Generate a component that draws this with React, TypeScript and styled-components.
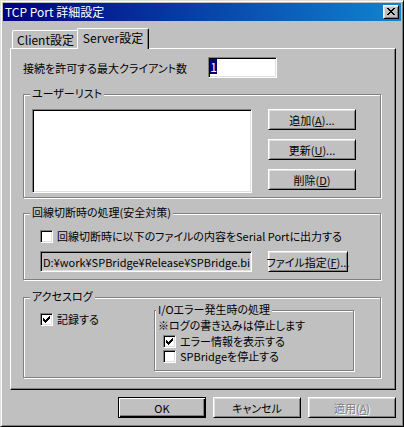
import React from "react";
import styled, { createGlobalStyle } from "styled-components";

const FACE = "#c0c0c0";
const LIGHT = "#dfdfdf";
const SHADOW = "#808080";
const DARK = "#000000";
const HI = "#ffffff";

const GlobalStyle = createGlobalStyle`
  html, body { margin: 0; padding: 0; background: ${FACE}; }
  body {
    font-family: "Noto Sans CJK JP", "Noto Sans", sans-serif;
    font-size: 11px;
    font-feature-settings: "palt" 1;
    color: #000;
  }
  *, *::before, *::after { box-sizing: border-box; }
`;

const Window = styled.div`
  width: 404px;
  height: 427px;
  background: ${FACE};
  border-top: 1px solid ${LIGHT};
  border-left: 1px solid ${LIGHT};
  border-right: 1px solid ${DARK};
  border-bottom: 1px solid ${DARK};
  box-shadow: inset 1px 1px 0 ${HI}, inset -1px -1px 0 ${SHADOW};
  padding: 2px;
  display: flex;
  flex-direction: column;
`;

const Caption = styled.div`
  height: 18px;
  flex: none;
  background: linear-gradient(to right, #000080, #1084d0);
  display: flex;
  align-items: center;
  padding: 0 2px 0 2px;
  color: #fff;
`;

const CaptionTitle = styled.span`
  font-size: 12px;
  line-height: 16px;
  white-space: nowrap;
`;

const CloseButton = styled.div`
  margin-left: auto;
  width: 16px;
  height: 14px;
  background: ${FACE};
  border-top: 1px solid ${HI};
  border-left: 1px solid ${HI};
  border-right: 1px solid ${DARK};
  border-bottom: 1px solid ${DARK};
  box-shadow: inset 1px 1px 0 ${LIGHT}, inset -1px -1px 0 ${SHADOW};
  padding: 2px 0 0 3px;
  svg { display: block; }
`;

const Body = styled.div`
  flex: 1;
  padding: 7px 5px 0 7px;
  display: flex;
  flex-direction: column;
`;

const TabRow = styled.div`
  height: 20px;
  display: flex;
  align-items: flex-end;
  padding-left: 2px;
  position: relative;
  z-index: 1;
`;

const Tab = styled.div<{ $active?: boolean; $w: number }>`
  width: ${(p) => p.$w}px;
  height: ${(p) => (p.$active ? 21 : 18)}px;
  margin-bottom: ${(p) => (p.$active ? -1 : 0)}px;
  margin-left: ${(p) => (p.$active ? -2 : 0)}px;
  background: ${FACE};
  border-top: 1px solid ${HI};
  border-left: 1px solid ${HI};
  border-right: 1px solid ${DARK};
  border-top-left-radius: 2px;
  border-top-right-radius: 2px;
  box-shadow: inset -1px 0 0 ${SHADOW};
  display: flex;
  align-items: center;
  justify-content: center;
  padding-bottom: ${(p) => (p.$active ? 2 : 0)}px;
  white-space: nowrap;
  font-size: 12px;
  line-height: 14px;
`;

const Panel = styled.div`
  width: 386px;
  height: 342px;
  flex: none;
  border-top: 1px solid ${HI};
  border-left: 1px solid ${HI};
  border-right: 1px solid ${DARK};
  border-bottom: 1px solid ${DARK};
  box-shadow: inset -1px -1px 0 ${SHADOW};
  padding: 8px 0 0 12px;
  display: flex;
  flex-direction: column;
`;

const FieldRow = styled.div`
  display: flex;
  align-items: center;
  height: 21px;
`;

const FieldLabel = styled.span`
  width: 185px;
  flex: none;
  white-space: nowrap;
`;

const Sunken = styled.div`
  flex: none;
  border-top: 1px solid ${SHADOW};
  border-left: 1px solid ${SHADOW};
  border-right: 1px solid ${HI};
  border-bottom: 1px solid ${HI};
  box-shadow: inset 1px 1px 0 ${DARK}, inset -1px -1px 0 ${LIGHT};
`;

const TextInput = styled(Sunken)`
  width: 69px;
  height: 21px;
  background: #fff;
  padding: 1px 0 0 1px;
  display: flex;
  align-items: flex-start;
`;

const Selection = styled.span`
  background: #000080;
  color: #fff;
  width: 7px;
  height: 15px;
  line-height: 15px;
  font-size: 12px;
  text-align: center;
`;

const Group = styled.div<{ $w: number; $h: number }>`
  position: relative;
  flex: none;
  width: ${(p) => p.$w}px;
  height: ${(p) => p.$h}px;
  border: 1px solid ${SHADOW};
  box-shadow: inset 1px 1px 0 ${HI}, 1px 1px 0 ${HI};
`;

const Legend = styled.span<{ $left: number }>`
  position: absolute;
  top: -10px;
  left: ${(p) => p.$left}px;
  padding: 0 2px;
  background: ${FACE};
  line-height: 16px;
  white-space: nowrap;
`;

const UserGroup = styled(Group)`
  margin-top: 16px;
  padding: 14px 0 0 8px;
  display: flex;
  align-items: flex-start;
`;

const ListBox = styled(Sunken)`
  width: 220px;
  height: 84px;
  background: #fff;
`;

const ButtonColumn = styled.div`
  margin-left: 16px;
  display: flex;
  flex-direction: column;
  gap: 9px;
`;

const Button = styled.div<{ $w?: number; $default?: boolean; $disabled?: boolean }>`
  width: ${(p) => p.$w ?? 88}px;
  height: 21px;
  flex: none;
  background: ${FACE};
  display: flex;
  align-items: center;
  justify-content: center;
  white-space: nowrap;
  line-height: 14px;
  color: ${(p) => (p.$disabled ? SHADOW : "#000")};
  text-shadow: ${(p) => (p.$disabled ? `1px 1px 0 ${HI}` : "none")};
  border: 1px solid ${DARK};
  border-top-color: ${(p) => (p.$default ? DARK : HI)};
  border-left-color: ${(p) => (p.$default ? DARK : HI)};
  box-shadow: ${(p) =>
    p.$default
      ? `inset 1px 1px 0 ${HI}, inset -1px -1px 0 ${DARK}, inset -2px -2px 0 ${SHADOW}`
      : `inset 1px 1px 0 ${LIGHT}, inset -1px -1px 0 ${SHADOW}`};
`;

const Mn = styled.span`
  text-decoration: underline;
  text-underline-offset: 1px;
`;

const SafetyGroup = styled(Group)`
  margin-top: 15px;
  padding: 16px 0 0 16px;
  display: flex;
  flex-direction: column;
`;

const CheckRow = styled.div`
  display: flex;
  align-items: center;
  gap: 4px;
  height: 13px;
  white-space: nowrap;
  line-height: 13px;
`;

const CheckBox = styled(Sunken)`
  width: 13px;
  height: 13px;
  background: #fff;
  padding: 2px;
  svg { display: block; }
`;

const PathRow = styled.div`
  margin-top: 8px;
  display: flex;
  gap: 16px;
`;

const PathBox = styled(Sunken)`
  width: 212px;
  height: 21px;
  background: ${FACE};
  padding: 0 0 0 2px;
  display: flex;
  align-items: center;
  overflow: hidden;
  white-space: nowrap;
`;

const LogGroup = styled(Group)`
  margin-top: 17px;
  padding: 12px 0 0 16px;
  display: flex;
  align-items: flex-start;
`;

const LogLeft = styled.div`
  width: 114px;
  flex: none;
  padding-top: 3px;
`;

const InnerGroup = styled(Group)`
  padding: 7px 0 0 3px;
  display: flex;
  flex-direction: column;
`;

const NoteLine = styled.div`
  height: 14px;
  line-height: 14px;
  white-space: nowrap;
`;

const InnerCheck = styled(CheckRow)<{ $top: number }>`
  margin-left: 5px;
  margin-top: ${(p) => p.$top}px;
`;

const FooterRow = styled.div`
  margin-top: 7px;
  display: flex;
  justify-content: flex-end;
  gap: 7px;
`;

const CloseGlyph = () => {
  const rows = ["XX....XX", ".XX..XX.", "..XXXX..", "...XX...", "..XXXX..", ".XX..XX.", "XX....XX"];
  return (
    <svg width="8" height="7" viewBox="0 0 8 7" shapeRendering="crispEdges">
      {rows.flatMap((r, y) =>
        r.split("").map((c, x) => (c === "X" ? <rect key={`${x}-${y}`} x={x} y={y} width="1" height="1" fill="#000" /> : null))
      )}
    </svg>
  );
};

const CheckMark = () => {
  const starts = [2, 3, 4, 3, 2, 1, 0];
  return (
    <svg width="7" height="7" viewBox="0 0 7 7" shapeRendering="crispEdges">
      {starts.map((s, x) => (
        <rect key={x} x={x} y={s} width="1" height="3" fill="#000" />
      ))}
    </svg>
  );
};

const Check: React.FC<{ checked?: boolean }> = ({ checked }) => (
  <CheckBox>{checked ? <CheckMark /> : null}</CheckBox>
);

export default function App() {
  return (
    <>
      <GlobalStyle />
      <Window>
        <Caption>
          <CaptionTitle>TCP Port 詳細設定</CaptionTitle>
          <CloseButton>
            <CloseGlyph />
          </CloseButton>
        </Caption>
        <Body>
          <TabRow>
            <Tab $w={67}>Client設定</Tab>
            <Tab $w={72} $active>
              Server設定
            </Tab>
          </TabRow>
          <Panel>
            <FieldRow>
              <FieldLabel>接続を許可する最大クライアント数</FieldLabel>
              <TextInput>
                <Selection>1</Selection>
              </TextInput>
            </FieldRow>

            <UserGroup $w={358} $h={104}>
              <Legend $left={6}>ユーザーリスト</Legend>
              <ListBox />
              <ButtonColumn>
                <Button>
                  追加(<Mn>A</Mn>)...
                </Button>
                <Button>
                  更新(<Mn>U</Mn>)...
                </Button>
                <Button>
                  削除(<Mn>D</Mn>)
                </Button>
              </ButtonColumn>
            </UserGroup>

            <SafetyGroup $w={358} $h={67}>
              <Legend $left={6}>回線切断時の処理(安全対策)</Legend>
              <CheckRow>
                <Check />
                <span>回線切断時に以下のファイルの内容をSerial Portに出力する</span>
              </CheckRow>
              <PathRow>
                <PathBox>D:¥work¥SPBridge¥Release¥SPBridge.bi</PathBox>
                <Button $w={80}>
                  ファイル指定(<Mn>F</Mn>)...
                </Button>
              </PathRow>
            </SafetyGroup>

            <LogGroup $w={358} $h={81}>
              <Legend $left={6}>アクセスログ</Legend>
              <LogLeft>
                <CheckRow>
                  <Check checked />
                  <span>記録する</span>
                </CheckRow>
              </LogLeft>
              <InnerGroup $w={200} $h={61}>
                <Legend $left={1}>I/Oエラー発生時の処理</Legend>
                <NoteLine>※ログの書き込みは停止します</NoteLine>
                <InnerCheck $top={3}>
                  <Check checked />
                  <span>エラー情報を表示する</span>
                </InnerCheck>
                <InnerCheck $top={2}>
                  <Check />
                  <span>SPBridgeを停止する</span>
                </InnerCheck>
              </InnerGroup>
            </LogGroup>
          </Panel>
          <FooterRow>
            <Button $default>OK</Button>
            <Button>キャンセル</Button>
            <Button $disabled>
              適用(<Mn>A</Mn>)
            </Button>
          </FooterRow>
        </Body>
      </Window>
    </>
  );
}
